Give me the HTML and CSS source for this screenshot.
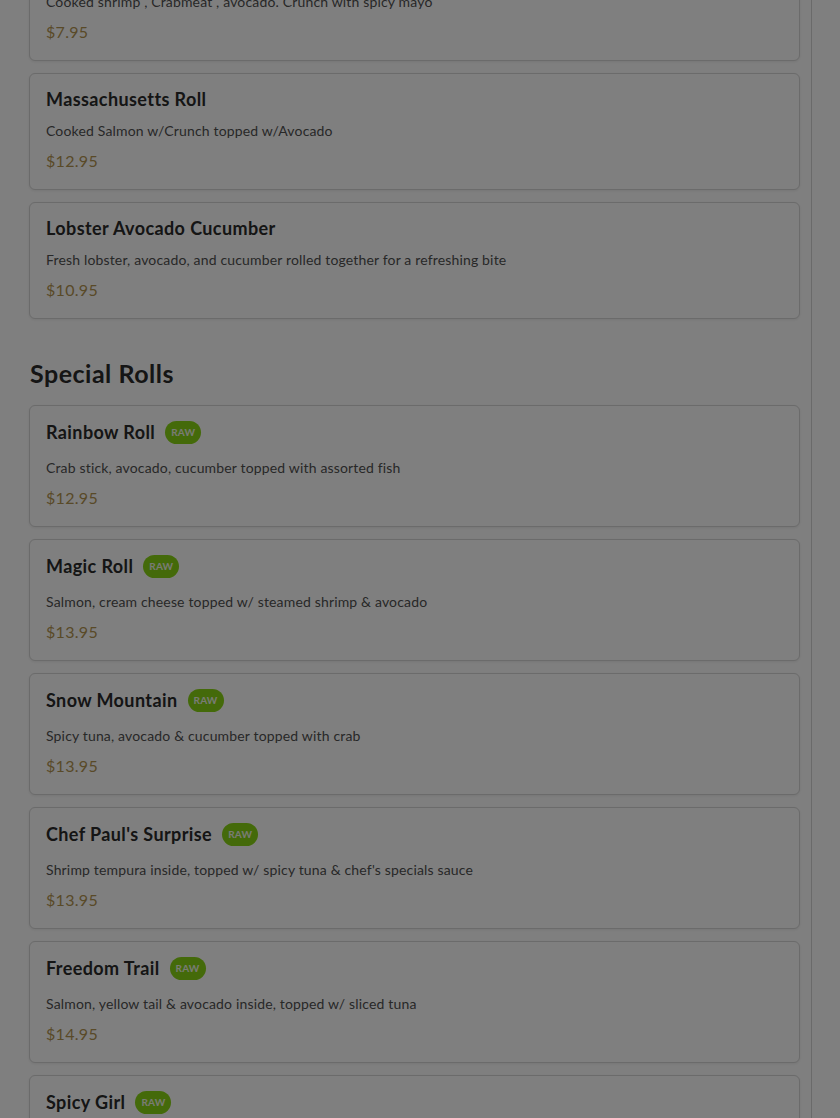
FILE: index.html
```html
<!DOCTYPE html>
<html lang="en">
<head>
<meta charset="utf-8">
<title>Menu</title>
<link rel="stylesheet" href="styles.css">
</head>
<body>
<div class="page">
  <main class="menu">
    <section class="section section-first">
      <div class="items">
        <article class="card">
          <div class="title-row"><h3 class="name">Crunchy Shrimp Roll</h3></div>
          <p class="desc">Cooked shrimp , Crabmeat , avocado. Crunch with spicy mayo</p>
          <p class="price">$7.95</p>
        </article>
        <article class="card">
          <div class="title-row"><h3 class="name">Massachusetts Roll</h3></div>
          <p class="desc">Cooked Salmon w/Crunch topped w/Avocado</p>
          <p class="price">$12.95</p>
        </article>
        <article class="card">
          <div class="title-row"><h3 class="name">Lobster Avocado Cucumber</h3></div>
          <p class="desc">Fresh lobster, avocado, and cucumber rolled together for a refreshing bite</p>
          <p class="price">$10.95</p>
        </article>
      </div>
    </section>

    <section class="section">
      <h2 class="section-title">Special Rolls</h2>
      <div class="items">
        <article class="card card-tagged">
          <div class="title-row"><h3 class="name">Rainbow Roll</h3><span class="badge">RAW</span></div>
          <p class="desc">Crab stick, avocado, cucumber topped with assorted fish</p>
          <p class="price">$12.95</p>
        </article>
        <article class="card card-tagged">
          <div class="title-row"><h3 class="name">Magic Roll</h3><span class="badge">RAW</span></div>
          <p class="desc">Salmon, cream cheese topped w/ steamed shrimp &amp; avocado</p>
          <p class="price">$13.95</p>
        </article>
        <article class="card card-tagged">
          <div class="title-row"><h3 class="name">Snow Mountain</h3><span class="badge">RAW</span></div>
          <p class="desc">Spicy tuna, avocado &amp; cucumber topped with crab</p>
          <p class="price">$13.95</p>
        </article>
        <article class="card card-tagged">
          <div class="title-row"><h3 class="name">Chef Paul's Surprise</h3><span class="badge">RAW</span></div>
          <p class="desc">Shrimp tempura inside, topped w/ spicy tuna &amp; chef's specials sauce</p>
          <p class="price">$13.95</p>
        </article>
        <article class="card card-tagged">
          <div class="title-row"><h3 class="name">Freedom Trail</h3><span class="badge">RAW</span></div>
          <p class="desc">Salmon, yellow tail &amp; avocado inside, topped w/ sliced tuna</p>
          <p class="price">$14.95</p>
        </article>
        <article class="card card-tagged">
          <div class="title-row"><h3 class="name">Spicy Girl</h3><span class="badge">RAW</span></div>
          <p class="desc">Spicy salmon inside, topped w/ tuna &amp; spicy mayo</p>
          <p class="price">$14.95</p>
        </article>
      </div>
    </section>
  </main>
</div>
<div class="backdrop"></div>
</body>
</html>
```

FILE: styles.css
```css
* { box-sizing: border-box; }

html, body {
  margin: 0;
  padding: 0;
  background: #ffffff;
}

body {
  font-family: Lato, "Noto Sans", "Liberation Sans", sans-serif;
  color: #2a2a2a;
  overflow: hidden;
}

.page {
  display: flex;
}

.menu {
  width: 812px;
  padding: 0 11px 0 29px;
  border-right: 1px solid #d4d4d4;
  min-height: 1200px;
}

.section-first {
  margin-top: -56px;
}

.section-title {
  margin: 39px 0 17px 1px;
  font-size: 25px;
  line-height: 30px;
  font-weight: 700;
  letter-spacing: 0.5px;
  color: #2a2a2a;
}

.items {
  display: flex;
  flex-direction: column;
  gap: 12px;
}

.card {
  border: 1px solid #d6d6d6;
  border-radius: 6px;
  padding: 14px 16px 17px;
  background: #ffffff;
  box-shadow: 0 1px 3px rgba(0, 0, 0, 0.08);
}

.title-row {
  display: flex;
  align-items: center;
  gap: 10px;
  min-height: 22px;
  margin-bottom: 11px;
}

.card-tagged .title-row {
  min-height: 24px;
  margin-bottom: 14px;
}

.name {
  margin: 0;
  font-size: 18px;
  line-height: 22px;
  font-weight: 700;
  letter-spacing: 0.4px;
  color: #2a2a2a;
}

.badge {
  display: inline-flex;
  align-items: center;
  height: 23px;
  padding: 0 6px;
  border-radius: 12px;
  background: #88d414;
  color: #f2f7e8;
  font-size: 10px;
  font-weight: 700;
  letter-spacing: 0.2px;
}

.desc {
  margin: 0 0 9px;
  font-size: 14px;
  line-height: 20px;
  letter-spacing: 0.16px;
  color: #505050;
}

.price {
  margin: 0;
  font-size: 16px;
  line-height: 22px;
  letter-spacing: 0.3px;
  color: #b39450;
}

.backdrop {
  position: fixed;
  inset: 0;
  background: rgba(0, 0, 0, 0.5);
}
```
